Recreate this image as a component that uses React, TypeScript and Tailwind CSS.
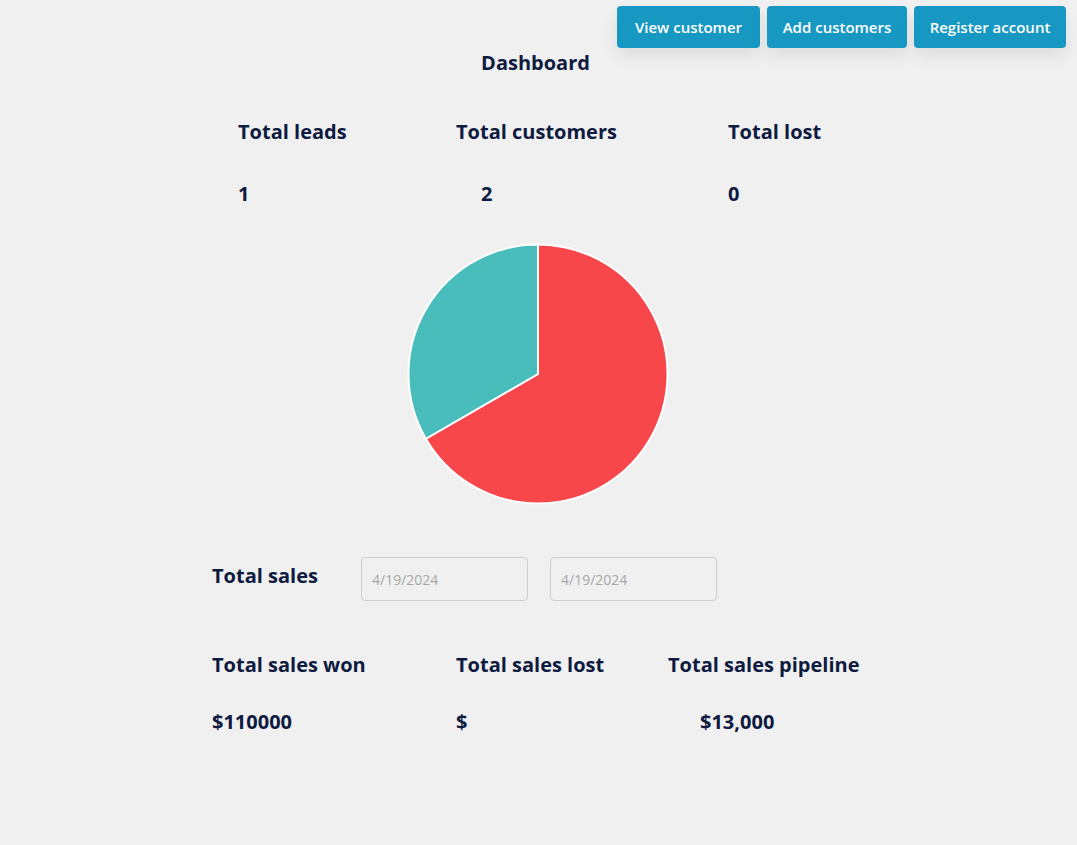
import React from "react";

const font = { fontFamily: '"Open Sans", "Noto Sans", sans-serif' };

function PieChart() {
  const cx = 131;
  const cy = 131;
  const r = 129.5;
  const a = (240 * Math.PI) / 180;
  const x = cx + r * Math.sin(a);
  const y = cy - r * Math.cos(a);
  return (
    <svg width="262" height="262" viewBox="0 0 262 262">
      <path
        d={`M ${cx} ${cy} L ${cx} ${cy - r} A ${r} ${r} 0 1 1 ${x} ${y} Z`}
        fill="#f7474b"
        stroke="#ffffff"
        strokeWidth="2"
        strokeLinejoin="round"
      />
      <path
        d={`M ${cx} ${cy} L ${x} ${y} A ${r} ${r} 0 0 1 ${cx} ${cy - r} Z`}
        fill="#48bdbb"
        stroke="#ffffff"
        strokeWidth="2"
        strokeLinejoin="round"
      />
    </svg>
  );
}

const buttons = [
  { label: "View customer", w: "w-[143px]" },
  { label: "Add customers", w: "w-[140px]" },
  { label: "Register account", w: "w-[152px]" },
];

export default function App() {
  return (
    <div className="min-h-[845px] w-full bg-[#f0f0f0] text-[#0e1a3f]" style={font}>
      <div className="flex justify-end gap-[7px] pt-[6px] pr-[11px]">
        {buttons.map((b) => (
          <button
            key={b.label}
            className={`${b.w} h-[42px] rounded-[4px] bg-[#1798c3] text-white text-[15px] font-semibold shadow-[0_8px_16px_rgba(0,0,0,0.08)]`}
          >
            {b.label}
          </button>
        ))}
      </div>

      <h1 className="mt-[2px] pr-[6px] text-center text-[20px] font-bold leading-[26px]">
        Dashboard
      </h1>

      <div className="mt-[43px] flex pl-[238px] text-[20px] font-bold leading-[26px]">
        <div className="w-[218px]">Total leads</div>
        <div className="w-[272px]">Total customers</div>
        <div>Total lost</div>
      </div>
      <div className="mt-[36px] flex pl-[238px] text-[20px] font-bold leading-[26px]">
        <div className="w-[218px]">1</div>
        <div className="w-[272px] pl-[25px]">2</div>
        <div>0</div>
      </div>

      <div className="mt-[36px] flex justify-center pr-[1px]">
        <PieChart />
      </div>

      <div className="mt-[52px] flex items-start pl-[212px]">
        <div className="w-[149px] pt-[6px] text-[20px] font-bold leading-[26px]">Total sales</div>
        <input
          type="text"
          defaultValue="4/19/2024"
          className="h-[44px] w-[167px] rounded-[4px] border border-[#cfcfcf] bg-transparent px-[10px] text-[14px] text-[#a6a6a6] outline-none"
        />
        <input
          type="text"
          defaultValue="4/19/2024"
          className="ml-[22px] h-[44px] w-[167px] rounded-[4px] border border-[#cfcfcf] bg-transparent px-[10px] text-[14px] text-[#a6a6a6] outline-none"
        />
      </div>

      <div className="mt-[51px] flex pl-[212px] text-[20px] font-bold leading-[26px]">
        <div className="w-[244px]">Total sales won</div>
        <div className="w-[212px]">Total sales lost</div>
        <div>Total sales pipeline</div>
      </div>
      <div className="mt-[31px] flex pl-[212px] text-[20px] font-bold leading-[26px]">
        <div className="w-[244px]">$110000</div>
        <div className="w-[212px]">$</div>
        <div className="pl-[32px]">$13,000</div>
      </div>
    </div>
  );
}
